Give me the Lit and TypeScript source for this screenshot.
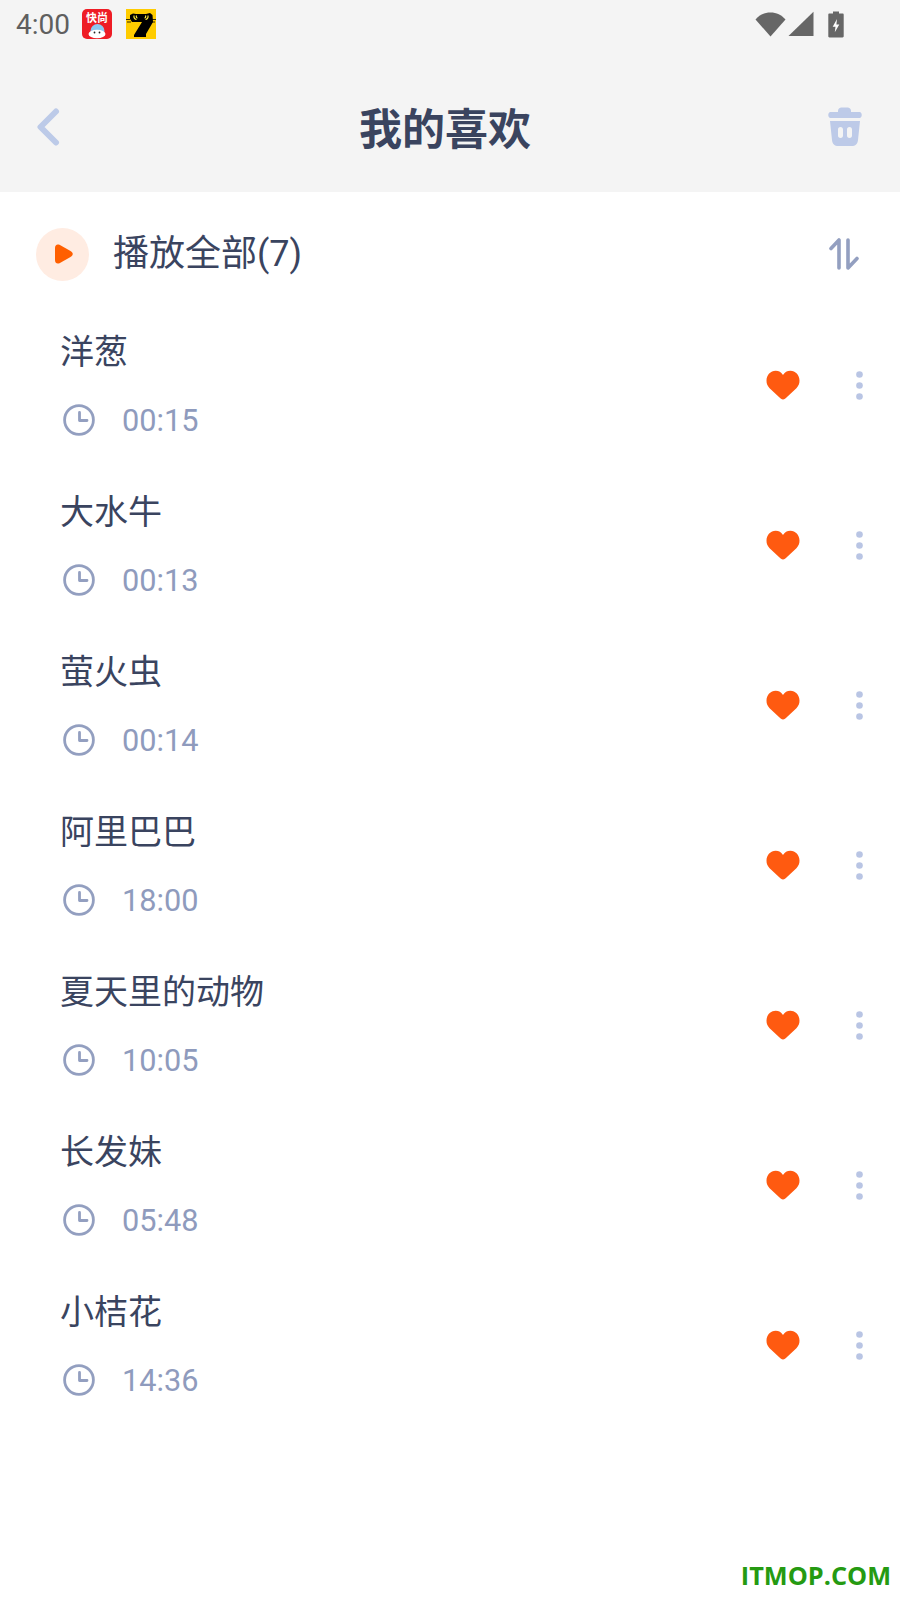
import { LitElement, html, css } from "lit";
import { customElement } from "lit/decorators.js";

const songs = [
  ["洋葱", "00:15"],
  ["大水牛", "00:13"],
  ["萤火虫", "00:14"],
  ["阿里巴巴", "18:00"],
  ["夏天里的动物", "10:05"],
  ["长发妹", "05:48"],
  ["小桔花", "14:36"],
];

@customElement("app-root")
export class AppRoot extends LitElement {
  static styles = css`
    :host {
      display: block;
      width: 900px;
      height: 1600px;
      background: #fff;
      font-family: Roboto, "Noto Sans CJK SC", sans-serif;
      color: #3a445f;
      position: relative;
      overflow: hidden;
    }
    svg { display: block; flex: none; }
    .top { background: #f4f4f4; height: 192px; display: flex; flex-direction: column; }
    .status { height: 48px; flex: none; display: flex; align-items: center; padding-left: 16px; }
    .clock-text { font-size: 28px; font-weight: 400; color: #5f5f5f; width: 66px; line-height: 48px; padding-top: 1px; }
    .app2 { margin-left: 14px; }
    .sys { margin-left: auto; margin-right: 56px; display: flex; align-items: center; }
    .wifi { margin-right: 2px; }
    .signal { margin-right: 14px; }
    .nav { flex: 1; display: flex; align-items: center; justify-content: space-between; padding: 14px 37px 0 36px; position: relative; }
    .title { position: absolute; left: 0; right: 0; text-align: center; font-size: 43px; font-weight: 700; line-height: 60px; padding: 5px 10px 0 0; }
    .playall { height: 113px; box-sizing: border-box; padding: 11px 36px 0; display: flex; align-items: center; }
    .circle { width: 53px; height: 53px; border-radius: 50%; background: #ffece2; display: flex; align-items: center; justify-content: center; margin-right: 24px; }
    .circle svg { margin-left: 3px; }
    .label { font-size: 36px; flex: 1; line-height: 50px; }
    .sort { margin-right: 5px; }
    .row { height: 160px; box-sizing: border-box; padding: 0 37px 0 60px; display: flex; align-items: center; }
    .info { flex: 1; padding-top: 2px; }
    .name { font-size: 34px; line-height: 48px; height: 48px; }
    .meta { display: flex; align-items: center; margin-top: 20px; height: 48px; color: #8f9bbd; font-size: 30.7px; gap: 27px; padding-left: 3px; }
    .more { margin-left: 56px; }
    .mark { position: absolute; right: 9px; bottom: 8px; font-family: "Open Sans", "Noto Sans", sans-serif; font-weight: 700; font-size: 25.3px; line-height: 34px; color: #259a12; }
  `;

  private clock() {
    return html`<svg width="32" height="32" viewBox="0 0 32 32" fill="none" stroke="#939fc0" stroke-width="2.8" stroke-linecap="round" stroke-linejoin="round">
      <circle cx="16" cy="16" r="14.4"></circle><path d="M16.500 8.500V16.500H24"></path></svg>`;
  }

  private heart() {
    return html`<svg width="34" height="30" viewBox="0 0 34 30"><path fill="#ff5a10" d="M17 29.500C15.500 29.500 14.500 28.400 13 27L3.600 18.200C1.200 15.900 .5 13.600 .5 10.600C.5 5 4.600 .8 9.600 .8C12.900 .8 15.400 2.300 17 5C18.600 2.300 21.100 .8 24.400 .8C29.400 .8 33.500 5 33.500 10.600C33.500 13.600 32.800 15.900 30.400 18.200L21 27C19.500 28.400 18.500 29.500 17 29.500Z"></path></svg>`;
  }

  private dots() {
    return html`<svg class="more" width="7" height="29" viewBox="0 0 7 29" fill="#b9c5e4"><circle cx="3.500" cy="3.500" r="3.300"></circle><circle cx="3.500" cy="14.500" r="3.300"></circle><circle cx="3.500" cy="25.500" r="3.300"></circle></svg>`;
  }

  private kuai() {
    return html`<svg width="30" height="30" viewBox="0 0 30 30">
      <rect width="30" height="30" rx="5" fill="#ee1c25"></rect>
      <text x="15" y="12.500" text-anchor="middle" font-size="11" font-weight="700" fill="#fff" font-family="Noto Sans CJK SC">快尚</text>
      <circle cx="15.500" cy="22" r="7" fill="#8cc8f0"></circle>
      <ellipse cx="15" cy="25" rx="8.500" ry="4.300" fill="#fff"></ellipse>
      <circle cx="12.500" cy="23.500" r=".9" fill="#222"></circle><circle cx="17.500" cy="23.500" r=".9" fill="#222"></circle>
    </svg>`;
  }

  private cat() {
    return html`<svg class="app2" width="30" height="30" viewBox="0 0 30 30">
      <rect width="30" height="30" fill="#ffcc00"></rect>
      <path fill="#000" d="M4 6L7 4.500L10 5H20L24 4L26.500 6L27 13L20 25V28H8V26L16 13H6L4 10Z"></path>
      <path d="M8 6.500C7.500 9 9 10.500 10.500 10.500M10.500 6.500C10 8 10.500 9 11.500 9M22 6.500C22.500 9 21 10.500 19.500 10.500M19.500 6.500C20 8 19.500 9 18.500 9" stroke="#ffe93d" stroke-width="1.200" fill="none"></path>
      <path d="M0 10.500H4M26 10.500H30M1 13H5M25 13H29" stroke="#000" stroke-width=".8"></path>
    </svg>`;
  }

  private sys() {
    return html`<div class="sys">
      <svg class="wifi" width="31" height="26" viewBox="0 0 31 26"><path fill="#666" d="M.5 8.500C4.500 4 9.500 1.500 15.500 1.500S26.500 4 30.500 8.500L15.500 25.500Z"></path></svg>
      <svg class="signal" width="26" height="26" viewBox="0 0 26 26"><path fill="#666" d="M.5 25L25.500 .8V25Z"></path></svg>
      <svg width="16" height="27" viewBox="0 0 16 27"><path fill="#666" d="M5 .5H11V2.500H14.500C15.300 2.500 15.700 3 15.700 3.700V25.300C15.700 26 15.300 26.500 14.500 26.500H1.500C.7 26.500 .3 26 .3 25.300V3.700C.3 3 .7 2.500 1.500 2.500H5Z"></path><path fill="#fff" d="M9 8L4.700 15.800H7.500L6.800 21.300L11.300 13.500H8.400Z"></path></svg>
    </div>`;
  }

  render() {
    return html`
      <div class="top">
        <div class="status">
          <div class="clock-text">4:00</div>
          ${this.kuai()}${this.cat()}${this.sys()}
        </div>
        <div class="nav">
          <svg width="24" height="38" viewBox="0 0 24 38" fill="none" stroke="#bccae8" stroke-width="6" stroke-linecap="round" stroke-linejoin="round"><path d="M20 3.500L4.500 19L20 34.500"></path></svg>
          <div class="title">我的喜欢</div>
          <svg width="36" height="40" viewBox="0 0 36 40" fill="#bdcae8"><path d="M11 4C11 2 12.500 .5 14.500 .5H20.500C22.500 .5 24 2 24 4V5H32.500C35.500 5 35.500 11 32.500 11H3.500C.5 11 .5 5 3.500 5H11Z"></path><path fill-rule="evenodd" d="M3 14H33L31 33C30.500 37 28.500 39 24.500 39H11.500C7.500 39 5.500 37 5 33ZM13.500 20C11.800 20 11 21 11 22.500V28.500C11 30 11.800 31 13.500 31S16 30 16 28.500V22.500C16 21 15.200 20 13.500 20ZM22.500 20C20.800 20 20 21 20 22.500V28.500C20 30 20.800 31 22.500 31S25 30 25 28.500V22.500C25 21 24.200 20 22.500 20Z"></path></svg>
        </div>
      </div>
      <div class="playall">
        <div class="circle"><svg width="18" height="20" viewBox="0 0 18 20"><path fill="#ff5f00" d="M0 4C0 1 2 -.3 4.500 .8L15.500 7C18.500 8.700 18.500 11.300 15.500 13L4.500 19.200C2 20.300 0 19 0 16Z"></path></svg></div>
        <div class="label">播放全部(7)</div>
        <svg class="sort" width="30" height="32" viewBox="0 0 30 32" fill="none" stroke="#939fc0" stroke-width="3.600" stroke-linecap="round" stroke-linejoin="round"><path d="M2 10.500L10 2V30"></path><path d="M19 2V30L28 20.500"></path></svg>
      </div>
      ${songs.map(([n, t]) => html`
        <div class="row">
          <div class="info">
            <div class="name">${n}</div>
            <div class="meta">${this.clock()}<span>${t}</span></div>
          </div>
          ${this.heart()}${this.dots()}
        </div>`)}
      <div class="mark">ITMOP.COM</div>
    `;
  }
}
